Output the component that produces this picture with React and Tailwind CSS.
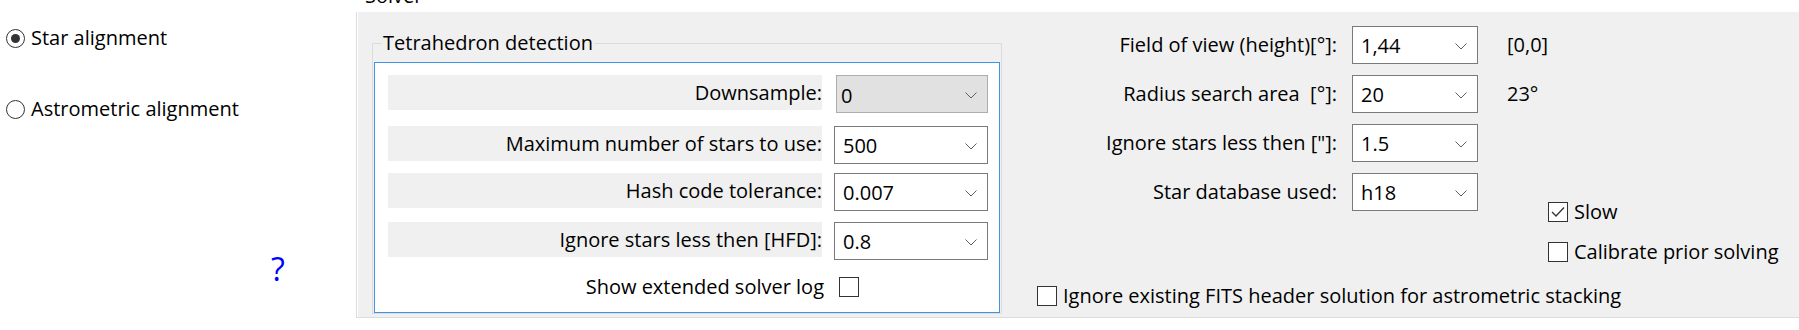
import React from 'react';

function Chevron() {
  return (
    <svg width="12" height="7" viewBox="0 0 12 7" className="shrink-0">
      <polyline points="0.5,0.5 6,6 11.5,0.5" fill="none" stroke="#606060" strokeWidth="1" />
    </svg>
  );
}

function Combo({ value, width = 'w-[154px]', disabled = false }) {
  return (
    <div
      className={
        disabled
          ? `${width} h-[38px] flex items-center justify-between pl-[4px] pr-[10px] pt-[3px] border border-[#adadad] bg-[#e1e1e1]`
          : `${width} h-[38px] flex items-center justify-between pl-[8px] pr-[10px] pt-[2px] border border-[#7a7a7a] bg-white`
      }
    >
      <span>{value}</span>
      <Chevron />
    </div>
  );
}

function CheckBox({ checked = false }) {
  return (
    <div className="w-[20px] h-[20px] shrink-0 border border-[#333333] bg-white flex items-center justify-center">
      {checked && (
        <svg width="14" height="12" viewBox="0 0 14 12">
          <polyline points="1,6 5,10 13,1.5" fill="none" stroke="#333333" strokeWidth="1.3" />
        </svg>
      )}
    </div>
  );
}

function Radio({ checked = false, label }) {
  return (
    <div className="flex items-center h-[24px] pl-[6px]">
      <div className="w-[19px] h-[19px] rounded-full border border-[#333333] flex items-center justify-center">
        {checked && <div className="w-[9px] h-[9px] rounded-full bg-[#333333]" />}
      </div>
      <span className="ml-[6px]">{label}</span>
    </div>
  );
}

export default function App() {
  const rowLabel = 'w-[434px] h-[35px] bg-[#f0f0f0] flex items-center justify-end';
  const rightLabel = 'w-[335px] h-[38px] flex items-center justify-end whitespace-pre';

  return (
    <div className="w-[1799px] h-[330px] bg-white flex text-black text-[20px] font-['Open_Sans',sans-serif] overflow-hidden">
      {/* Alignment method */}
      <div className="w-[356px] flex flex-col">
        <div className="mt-[26px]">
          <Radio checked label="Star alignment" />
        </div>
        <div className="mt-[47px]">
          <Radio label="Astrometric alignment" />
        </div>
        <div className="mt-[128px] pl-[271px] text-[32px] leading-[40px] text-[#0000ff]">?</div>
      </div>

      {/* Solver group */}
      <div className="flex-1 flex flex-col">
        <div className="h-[12px] overflow-hidden pl-[9px]">
          <div className="leading-[20px] -mt-[14px]">Solver</div>
        </div>
        <div className="h-[306px] border-l border-b border-[#dcdcdc] pl-[1px]">
          <div className="h-full bg-[#f0f0f0] flex">
            {/* Tetrahedron detection */}
            <div className="ml-[14px] mt-[31px] w-[630px] h-[271px] relative border border-[#dcdcdc] pt-[18px] pl-[1px] pr-[1px]">
              <span className="absolute left-[9px] -top-[15px] px-[1px] bg-[#f0f0f0] leading-[28px]">
                Tetrahedron detection
              </span>
              <div className="h-[251px] border border-[#3c95e6] bg-white pl-[13px]">
                <div className="mt-[12px] flex items-start">
                  <div className={rowLabel}>Downsample:</div>
                  <div className="ml-[14px]">
                    <Combo value="0" width="w-[152px]" disabled />
                  </div>
                </div>
                <div className="mt-[13px] flex items-start">
                  <div className={rowLabel}>Maximum number of stars to use:</div>
                  <div className="ml-[12px]">
                    <Combo value="500" />
                  </div>
                </div>
                <div className="mt-[9px] flex items-start">
                  <div className={rowLabel}>Hash code tolerance:</div>
                  <div className="ml-[12px]">
                    <Combo value="0.007" />
                  </div>
                </div>
                <div className="mt-[11px] flex items-start">
                  <div className={rowLabel}>Ignore stars less then [HFD]:</div>
                  <div className="ml-[12px]">
                    <Combo value="0.8" />
                  </div>
                </div>
                <div className="mt-[17px] flex items-center h-[20px]">
                  <div className="w-[436px] text-right">Show extended solver log</div>
                  <div className="ml-[15px]">
                    <CheckBox />
                  </div>
                </div>
              </div>
            </div>

            {/* Solver settings */}
            <div className="flex flex-col">
              <div className="flex">
                <div className="flex flex-col mt-[14px] gap-[11px]">
                  <div className="flex items-center">
                    <div className={rightLabel}>Field of view (height)[°]:</div>
                    <div className="ml-[15px]">
                      <Combo value="1,44" width="w-[126px]" />
                    </div>
                  </div>
                  <div className="flex items-center">
                    <div className={rightLabel}>Radius search area  [°]:</div>
                    <div className="ml-[15px]">
                      <Combo value="20" width="w-[126px]" />
                    </div>
                  </div>
                  <div className="flex items-center">
                    <div className={rightLabel}>Ignore stars less then ["]:</div>
                    <div className="ml-[15px]">
                      <Combo value="1.5" width="w-[126px]" />
                    </div>
                  </div>
                  <div className="flex items-center">
                    <div className={rightLabel}>Star database used:</div>
                    <div className="ml-[15px]">
                      <Combo value="h18" width="w-[126px]" />
                    </div>
                  </div>
                </div>
                <div className="flex flex-col mt-[14px]">
                  <div className="h-[38px] flex items-center pl-[29px]">[0,0]</div>
                  <div className="mt-[11px] h-[38px] flex items-center pl-[29px]">23°</div>
                  <div className="mt-[89px] h-[20px] flex items-center pl-[70px]">
                    <CheckBox checked />
                    <span className="ml-[6px]">Slow</span>
                  </div>
                  <div className="mt-[20px] h-[20px] flex items-center pl-[70px]">
                    <CheckBox />
                    <span className="ml-[6px]">Calibrate prior solving</span>
                  </div>
                </div>
              </div>
              <div className="mt-[24px] h-[20px] flex items-center pl-[35px]">
                <CheckBox />
                <span className="ml-[6px]">Ignore existing FITS header solution for astrometric stacking</span>
              </div>
            </div>
          </div>
        </div>
      </div>
    </div>
  );
}
